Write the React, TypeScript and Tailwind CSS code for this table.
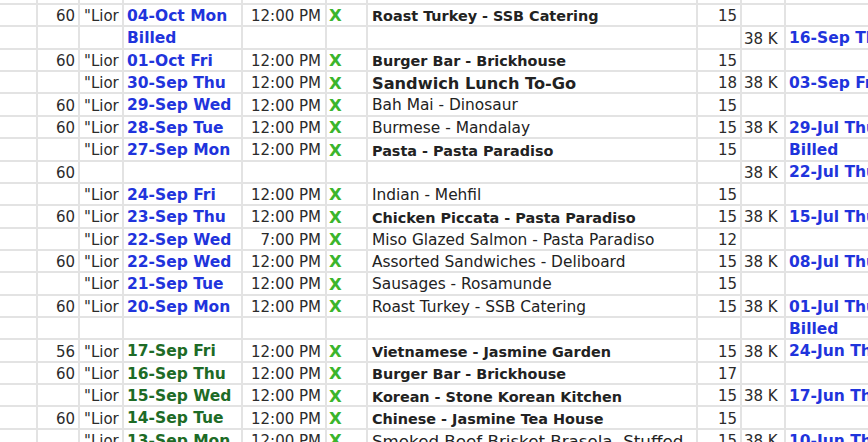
import clsx from 'clsx';

type Row = {
  qty?: string;
  chef?: boolean;
  date?: string;
  green?: boolean;
  time?: string;
  menu?: string;
  weight?: 'bold' | 'regular' | 'big' | 'large';
  count?: string;
  amount?: string;
  billed?: string;
};

const rows: Row[] = [
  { qty: '60', chef: true, date: '04-Oct Mon', time: '12:00 PM', menu: 'Roast Turkey - SSB Catering', weight: 'bold', count: '15' },
  { date: 'Billed', amount: '38 K', billed: '16-Sep Thu' },
  { qty: '60', chef: true, date: '01-Oct Fri', time: '12:00 PM', menu: 'Burger Bar - Brickhouse', weight: 'bold', count: '15' },
  { chef: true, date: '30-Sep Thu', time: '12:00 PM', menu: 'Sandwich Lunch To-Go', weight: 'big', count: '18', amount: '38 K', billed: '03-Sep Fri' },
  { qty: '60', chef: true, date: '29-Sep Wed', time: '12:00 PM', menu: 'Bah Mai - Dinosaur', count: '15' },
  { qty: '60', chef: true, date: '28-Sep Tue', time: '12:00 PM', menu: 'Burmese - Mandalay', count: '15', amount: '38 K', billed: '29-Jul Thu' },
  { chef: true, date: '27-Sep Mon', time: '12:00 PM', menu: 'Pasta - Pasta Paradiso', weight: 'bold', count: '15', billed: 'Billed' },
  { qty: '60', amount: '38 K', billed: '22-Jul Thu' },
  { chef: true, date: '24-Sep Fri', time: '12:00 PM', menu: 'Indian - Mehfil', count: '15' },
  { qty: '60', chef: true, date: '23-Sep Thu', time: '12:00 PM', menu: 'Chicken Piccata - Pasta Paradiso', weight: 'bold', count: '15', amount: '38 K', billed: '15-Jul Thu' },
  { chef: true, date: '22-Sep Wed', time: '7:00 PM', menu: 'Miso Glazed Salmon - Pasta Paradiso', count: '12' },
  { qty: '60', chef: true, date: '22-Sep Wed', time: '12:00 PM', menu: 'Assorted Sandwiches - Deliboard', count: '15', amount: '38 K', billed: '08-Jul Thu' },
  { chef: true, date: '21-Sep Tue', time: '12:00 PM', menu: 'Sausages - Rosamunde', count: '15' },
  { qty: '60', chef: true, date: '20-Sep Mon', time: '12:00 PM', menu: 'Roast Turkey - SSB Catering', count: '15', amount: '38 K', billed: '01-Jul Thu' },
  { billed: 'Billed' },
  { qty: '56', chef: true, date: '17-Sep Fri', green: true, time: '12:00 PM', menu: 'Vietnamese - Jasmine Garden', weight: 'bold', count: '15', amount: '38 K', billed: '24-Jun Thu' },
  { qty: '60', chef: true, date: '16-Sep Thu', green: true, time: '12:00 PM', menu: 'Burger Bar - Brickhouse', weight: 'bold', count: '17' },
  { chef: true, date: '15-Sep Wed', green: true, time: '12:00 PM', menu: 'Korean - Stone Korean Kitchen', weight: 'bold', count: '15', amount: '38 K', billed: '17-Jun Thu' },
  { qty: '60', chef: true, date: '14-Sep Tue', green: true, time: '12:00 PM', menu: 'Chinese - Jasmine Tea House', weight: 'bold', count: '15' },
  { chef: true, date: '13-Sep Mon', green: true, time: '12:00 PM', menu: 'Smoked Beef Brisket Brasola, Stuffed', weight: 'large', count: '15', amount: '38 K', billed: '10-Jun Thu' },
];

// every cell carries its own right grid line; text sits a touch below centre like the sheet
const cell = 'h-full shrink-0 flex items-center pt-[3px] overflow-hidden whitespace-nowrap border-r-2 border-[#e3e3e3]';

function SheetRow({ row, top = false }: { row: Row; top?: boolean }) {
  const dark = top ? 'border-[#e3e3e3]' : 'border-[#2e2e2e]';

  return (
    <div className={clsx('flex border-b-2 border-[#e3e3e3]', top ? 'h-[5px]' : 'h-[22.37px]')}>
      <div className={clsx(cell, 'w-[38px]')} />
      <div className={clsx(cell, dark, 'w-[42px] justify-end pr-[3px] text-[15px] text-[#2b2b2b]')}>{row.qty}</div>
      <div className={clsx(cell, 'w-[44px] pl-[4px] text-[15px] text-[#2b2b2b]')}>{row.chef && '"Lior'}</div>
      <div
        className={clsx(
          cell,
          'w-[119px] pl-[3px] text-[15.5px] font-bold',
          row.green ? 'text-[#1d6b26]' : 'text-[#1f34dc]'
        )}
      >
        {row.date}
      </div>
      <div className={clsx(cell, 'w-[84px] justify-end pr-[4px] text-[15px] text-[#2b2b2b]')}>{row.time}</div>
      <div className={clsx(cell, 'w-[41px] pl-[2px] text-[16.5px] font-bold text-[#3bb52c]')}>{row.time && 'X'}</div>
      <div
        className={clsx(
          cell,
          'w-[330px] pl-[4px] text-[#222222]',
          row.weight === 'bold' && 'text-[14.4px] font-bold',
          row.weight === 'big' && 'text-[16.2px] font-bold',
          row.weight === 'large' && 'text-[16.7px]',
          !row.weight && 'text-[15.4px]'
        )}
      >
        {row.menu}
      </div>
      <div className={clsx(cell, dark, 'w-[44px] justify-end pr-[3px] text-[15px] text-[#2b2b2b]')}>{row.count}</div>
      <div className={clsx(cell, 'w-[44px] pl-[2px] text-[15px] text-[#2b2b2b]')}>{row.amount}</div>
      <div className="h-full flex-1 flex items-center pt-[3px] overflow-hidden whitespace-nowrap pl-[3px] text-[15.5px] font-bold text-[#1f34dc]">
        {row.billed}
      </div>
    </div>
  );
}

export default function App() {
  return (
    <div className="w-[868px] h-[442px] overflow-hidden bg-white font-['DejaVu_Sans',sans-serif] leading-none">
      <SheetRow row={{}} top />
      {rows.map((row, i) => (
        <SheetRow key={i} row={row} />
      ))}
    </div>
  );
}
